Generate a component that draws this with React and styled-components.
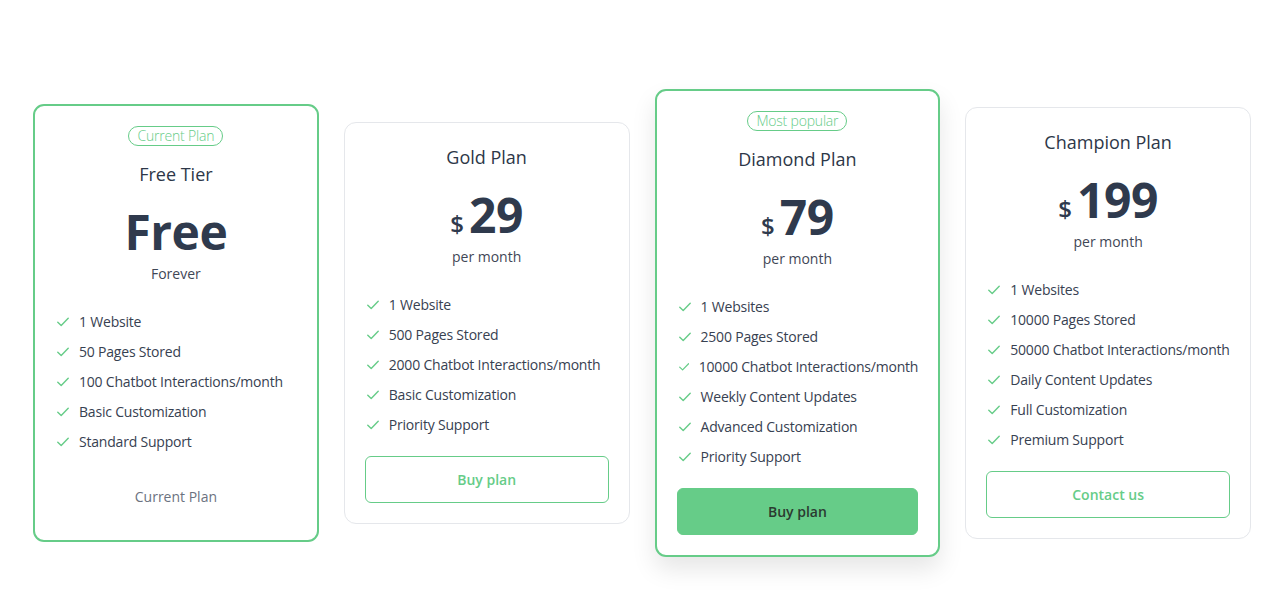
import React from 'react';
import styled, { createGlobalStyle, css } from 'styled-components';

const GlobalStyle = createGlobalStyle`
  body {
    margin: 0;
    background: #ffffff;
    font-family: 'Open Sans', 'Noto Sans', sans-serif;
    color: #374151;
  }
`;

const green = '#66cc88';

const Page = styled.div`
  min-height: 598px;
  box-sizing: border-box;
  padding: 89px 33px 0 33px;
`;

const Grid = styled.div`
  display: grid;
  grid-template-columns: repeat(4, minmax(0, 1fr));
  gap: 25px;
  align-items: center;
`;

const Card = styled.div`
  background: #fff;
  border: 1px solid #e5e7eb;
  border-radius: 12px;
  padding: 20px;
  display: flex;
  flex-direction: column;
  align-items: stretch;
  text-align: center;
  ${(p) =>
    p.$highlight &&
    css`
      border: 2px solid ${green};
      border-radius: 11px;
    `}
  ${(p) =>
    p.$shadow &&
    css`
      box-shadow: 0 12px 24px rgba(0, 0, 0, 0.1);
    `}
`;

const Badge = styled.span`
  align-self: center;
  box-sizing: border-box;
  height: 20px;
  line-height: 18px;
  padding: 0 8px;
  border: 1px solid ${green};
  border-radius: 999px;
  color: ${green};
  font-size: 14px;
  font-weight: 300;
  letter-spacing: -0.2px;
  margin: 0 0 14px;
`;

const Title = styled.h3`
  margin: 0;
  font-size: 18px;
  line-height: 28px;
  font-weight: 400;
  color: #2d3748;
`;

const PriceRow = styled.div`
  margin-top: 20px;
  display: flex;
  justify-content: center;
  align-items: baseline;
  gap: 5px;
  color: #2f3a4d;
`;

const Currency = styled.span`
  font-size: 24px;
  font-weight: 600;
  line-height: 1;
`;

const Amount = styled.span`
  font-size: 48px;
  font-weight: 700;
  line-height: 48px;
  letter-spacing: -0.5px;
`;

const Period = styled.div`
  margin-top: 8px;
  font-size: 14px;
  line-height: 20px;
  color: #3f4756;
`;

const Features = styled.ul`
  list-style: none;
  margin: 28px 0 0;
  padding: 0 0 0 2px;
  display: flex;
  flex-direction: column;
  gap: 10px;
  text-align: left;
`;

const Feature = styled.li`
  display: flex;
  align-items: center;
  gap: 10px;
  font-size: 14px;
  line-height: 20px;
  letter-spacing: -0.2px;
  color: #374151;
  white-space: nowrap;
`;

const Button = styled.button`
  margin-top: 21px;
  height: 47px;
  border-radius: 6px;
  font-family: inherit;
  font-size: 14px;
  font-weight: 600;
  cursor: pointer;
  border: 1px solid ${green};
  background: ${(p) => (p.$filled ? green : '#fff')};
  color: ${(p) => (p.$filled ? '#2b3a30' : green)};
`;

const Footer = styled.div`
  margin-top: 21px;
  height: 47px;
  line-height: 47px;
  font-size: 14px;
  color: #6b7280;
`;

const Check = () => (
  <svg width="12" height="10" viewBox="0 0 12 10" fill="none">
    <path d="M0.8 5.2 L4.2 8.4 L11.2 1.2" stroke={green} strokeWidth="1.4" strokeLinecap="round" strokeLinejoin="round" />
  </svg>
);

const plans = [
  {
    badge: 'Current Plan',
    title: 'Free Tier',
    price: 'Free',
    period: 'Forever',
    features: ['1 Website', '50 Pages Stored', '100 Chatbot Interactions/month', 'Basic Customization', 'Standard Support'],
    footer: 'Current Plan',
    highlight: true,
  },
  {
    title: 'Gold Plan',
    price: '29',
    currency: true,
    period: 'per month',
    features: ['1 Website', '500 Pages Stored', '2000 Chatbot Interactions/month', 'Basic Customization', 'Priority Support'],
    button: 'Buy plan',
  },
  {
    badge: 'Most popular',
    title: 'Diamond Plan',
    price: '79',
    currency: true,
    period: 'per month',
    features: [
      '1 Websites',
      '2500 Pages Stored',
      '10000 Chatbot Interactions/month',
      'Weekly Content Updates',
      'Advanced Customization',
      'Priority Support',
    ],
    button: 'Buy plan',
    filled: true,
    highlight: true,
    shadow: true,
  },
  {
    title: 'Champion Plan',
    price: '199',
    currency: true,
    period: 'per month',
    features: [
      '1 Websites',
      '10000 Pages Stored',
      '50000 Chatbot Interactions/month',
      'Daily Content Updates',
      'Full Customization',
      'Premium Support',
    ],
    button: 'Contact us',
  },
];

const App = () => {
  return (
    <>
      <GlobalStyle />
      <Page>
        <Grid>
          {plans.map((plan) => (
            <Card key={plan.title} $highlight={plan.highlight} $shadow={plan.shadow}>
              {plan.badge && <Badge>{plan.badge}</Badge>}
              <Title>{plan.title}</Title>
              <PriceRow>
                {plan.currency && <Currency>$</Currency>}
                <Amount>{plan.price}</Amount>
              </PriceRow>
              <Period>{plan.period}</Period>
              <Features>
                {plan.features.map((f) => (
                  <Feature key={f}>
                    <Check />
                    {f}
                  </Feature>
                ))}
              </Features>
              {plan.footer && <Footer>{plan.footer}</Footer>}
              {plan.button && <Button $filled={plan.filled}>{plan.button}</Button>}
            </Card>
          ))}
        </Grid>
      </Page>
    </>
  );
};

export default App;
